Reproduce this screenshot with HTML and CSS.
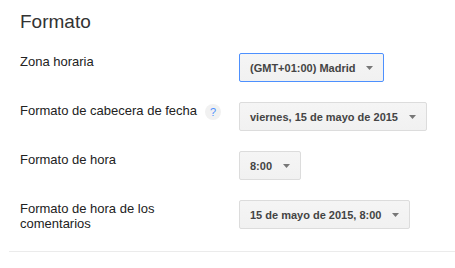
FILE: index.html
```html
<!DOCTYPE html>
<html lang="es">
<head>
<meta charset="utf-8">
<title>Formato</title>
<link rel="stylesheet" href="styles.css">
</head>
<body>
<div class="panel">
  <h2 class="title">Formato</h2>
  <div class="rows">
    <div class="row">
      <div class="label-cell"><span class="label">Zona horaria</span></div>
      <div class="control"><button class="select focused"><span>(GMT+01:00) Madrid</span><svg class="arrow" width="7" height="4" viewBox="0 0 7 4"><path d="M0 0H7L3.5 4Z" fill="#777"/></svg></button></div>
    </div>
    <div class="row">
      <div class="label-cell"><span class="label">Formato de cabecera de fecha</span><span class="help">?</span></div>
      <div class="control"><button class="select"><span>viernes, 15 de mayo de 2015</span><svg class="arrow" width="7" height="4" viewBox="0 0 7 4"><path d="M0 0H7L3.5 4Z" fill="#777"/></svg></button></div>
    </div>
    <div class="row">
      <div class="label-cell"><span class="label">Formato de hora</span></div>
      <div class="control"><button class="select"><span>8:00</span><svg class="arrow" width="7" height="4" viewBox="0 0 7 4"><path d="M0 0H7L3.5 4Z" fill="#777"/></svg></button></div>
    </div>
    <div class="row">
      <div class="label-cell"><span class="label">Formato de hora de los comentarios</span></div>
      <div class="control"><button class="select"><span>15 de mayo de 2015, 8:00</span><svg class="arrow" width="7" height="4" viewBox="0 0 7 4"><path d="M0 0H7L3.5 4Z" fill="#777"/></svg></button></div>
    </div>
  </div>
  <div class="rule"></div>
</div>
</body>
</html>
```

FILE: styles.css
```css
html, body {
  margin: 0;
  padding: 0;
  background: #fff;
}
body {
  font-family: Arial, "Liberation Sans", sans-serif;
  color: #222;
}
.panel {
  padding-left: 9px;
}
.title {
  margin: 0 0 20px 11px;
  padding-top: 11px;
  font-size: 19px;
  line-height: 22px;
  font-weight: normal;
  color: #333;
}
.rows {
  margin-left: 11px;
  display: flex;
  flex-direction: column;
  gap: 20px;
}
.row {
  display: grid;
  grid-template-columns: 219px auto;
  align-items: start;
}
.label-cell {
  display: flex;
  align-items: flex-start;
}
.label {
  max-width: 190px;
  font-size: 13px;
  line-height: 15px;
  padding-top: 1px;
  color: #222;
}
.help {
  width: 16px;
  height: 16px;
  margin: 2px 0 0 8px;
  border-radius: 50%;
  background: #f1f1f1;
  color: #4d90fe;
  font-size: 11px;
  line-height: 16px;
  text-align: center;
}
.control {
  display: flex;
}
.select {
  display: flex;
  align-items: center;
  box-sizing: border-box;
  height: 29px;
  margin: 0;
  padding: 0 10px;
  border: 1px solid #dcdcdc;
  border-radius: 2px;
  background: linear-gradient(#f5f5f5, #f1f1f1);
  font-family: Arial, "Liberation Sans", sans-serif;
  font-size: 11px;
  font-weight: bold;
  color: #444;
  cursor: default;
}
.select.focused {
  border-color: #4d90fe;
}
.arrow {
  display: block;
  margin-left: 11px;
}
.rule {
  margin-top: 20px;
  height: 1px;
  background: #ebebeb;
}
```
